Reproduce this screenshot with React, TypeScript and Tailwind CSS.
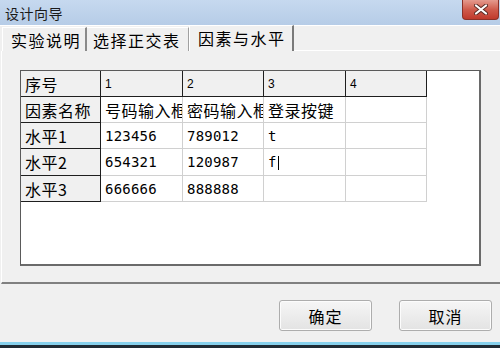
import React from 'react';

const CJK = "font-['Noto_Sans_CJK_SC',sans-serif]";
const MONO = "font-['DejaVu_Sans_Mono','Noto_Sans_CJK_SC',monospace]";

type Cell = { text: string; head?: boolean; mono?: boolean; caret?: boolean };

const ROWS: Cell[][] = [
  [
    { text: '序号', head: true },
    { text: '1', head: true },
    { text: '2', head: true },
    { text: '3', head: true },
    { text: '4', head: true },
  ],
  [
    { text: '因素名称', head: true },
    { text: '号码输入框' },
    { text: '密码输入框' },
    { text: '登录按键' },
    { text: '' },
  ],
  [
    { text: '水平1', head: true },
    { text: '123456', mono: true },
    { text: '789012', mono: true },
    { text: 't', mono: true },
    { text: '' },
  ],
  [
    { text: '水平2', head: true },
    { text: '654321', mono: true },
    { text: '120987', mono: true },
    { text: 'f', mono: true, caret: true },
    { text: '' },
  ],
  [
    { text: '水平3', head: true },
    { text: '666666', mono: true },
    { text: '888888', mono: true },
    { text: '' },
    { text: '' },
  ],
];

export default function App() {
  return (
    <div className={`w-[500px] h-[348px] bg-[#f0f0f0] flex flex-col overflow-hidden text-black ${CJK}`}>
      {/* Title bar */}
      <div className="relative h-[25px] shrink-0 bg-gradient-to-b from-[#c6d9ef] to-[#b6cce7] flex items-center pl-[5px]">
        <span className="text-[14px] tracking-[0.5px] leading-none text-[#1a1a1a]">设计向导</span>
        <div className="absolute right-[1px] top-0 w-[37px] h-[20px] rounded-b-[4px] border border-t-0 border-[#8a3128] bg-gradient-to-b from-[#e49a8e] via-[#cf5b4c] to-[#c0392b] flex items-center justify-center">
          <svg width="14" height="11" viewBox="0 0 14 11">
            <path d="M2 1.5 L12 9.5 M12 1.5 L2 9.5" stroke="#5a2a24" strokeWidth="4" strokeLinecap="round" />
            <path d="M2 1.5 L12 9.5 M12 1.5 L2 9.5" stroke="#ffffff" strokeWidth="2.2" strokeLinecap="round" />
          </svg>
        </div>
      </div>

      {/* Tab strip */}
      <div className="h-[26px] shrink-0 border-t border-white flex items-end pl-[2px]">
        <div className="h-[24px] w-[85px] border-l border-t border-white border-r-2 border-r-[#8a8a8a] flex items-center pl-[8px]">
          <span className="text-[16px] tracking-[1.5px] leading-none">实验说明</span>
        </div>
        <div className="h-[24px] w-[102px] border-t border-white border-r border-r-[#a0a0a0] flex items-center pl-[6px]">
          <span className="text-[16px] tracking-[1.5px] leading-none">选择正交表</span>
        </div>
        <div className="h-[26px] w-[105px] border-l border-t border-white border-r-2 border-r-[#7a7a7a] flex items-center pl-[8px] pb-[2px]">
          <span className="text-[16px] tracking-[1.5px] leading-none">因素与水平</span>
        </div>
        <div className="flex-1 h-[1px] bg-white" />
      </div>

      {/* Tab panel */}
      <div className="h-[233px] shrink-0 ml-[1px] border-l border-white border-b-2 border-b-[#808080] pl-[18px] pt-[19px]">
        <div className="w-[461px] h-[196px] bg-white border border-[#5a5a5a] border-r-2 border-b-2 border-r-[#6a6a6a] border-b-[#6a6a6a]">
          <div className="grid grid-cols-[80px_82px_81px_82px_81px] grid-rows-[26px_26px_26px_27px_26px] w-fit">
            {ROWS.map((row, r) =>
              row.map((c, i) => (
                <div
                  key={`${r}-${i}`}
                  className={`flex items-center pl-[4px] overflow-hidden whitespace-nowrap border-r border-b ${
                    c.head
                      ? 'bg-[#f0f0f0] border-[#1e1e1e]'
                      : i === 1
                      ? 'bg-white border-[#d0d0d0] border-l-0'
                      : 'bg-white border-[#d0d0d0]'
                  } ${r === 0 ? 'border-b-[#1e1e1e]' : ''}`}
                >
                  {c.mono ? (
                    <span className={`${MONO} text-[14px] leading-none tracking-[0.2px]`}>
                      {c.text}
                      {c.caret && <span className="inline-block align-middle w-[1px] h-[14px] bg-black ml-[1px]" />}
                    </span>
                  ) : r === 0 && i > 0 ? (
                    <span className="font-['Liberation_Sans',sans-serif] text-[12px] leading-none">{c.text}</span>
                  ) : (
                    <span className="text-[16px] tracking-[0.5px] leading-none">{c.text}</span>
                  )}
                </div>
              ))
            )}
          </div>
        </div>
      </div>

      {/* Buttons */}
      <div className="h-[58px] shrink-0 flex justify-end items-start pt-[16px] pr-[8px] gap-[27px]">
        {['确定', '取消'].map((t) => (
          <button
            key={t}
            className="w-[93px] h-[31px] rounded-[3px] border border-[#adadad] bg-gradient-to-b from-[#f6f6f6] to-[#e3e3e3] shadow-[inset_0_0_0_1px_#fcfcfc] flex items-center justify-center"
          >
            <span className="text-[16px] tracking-[1px] leading-none">{t}</span>
          </button>
        ))}
      </div>

      {/* Window bottom frame */}
      <div className="h-[3px] shrink-0 bg-[#86d0ec]" />
      <div className="h-[3px] shrink-0 bg-[#1f2a33]" />
    </div>
  );
}
